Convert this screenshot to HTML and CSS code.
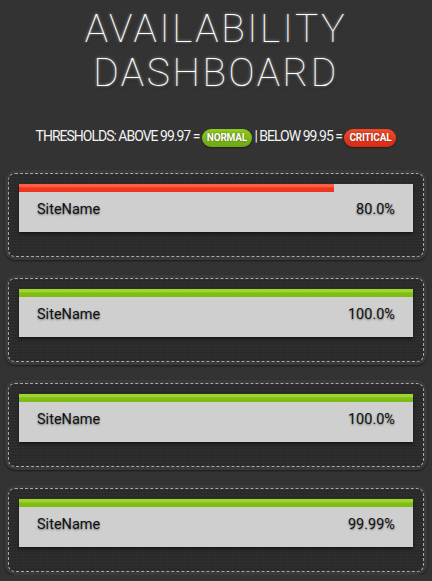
FILE: index.html
```html
<!DOCTYPE html>
<html>
<head>
<meta charset="utf-8">
<link rel="stylesheet" href="styles.css">
</head>
<body>
<h1 class="title">AVAILABILITY<br>DASHBOARD</h1>
<p class="thresholds">THRESHOLDS: ABOVE 99.97 = <span class="pill pill-normal">NORMAL</span> | BELOW 99.95 = <span class="pill pill-critical">CRITICAL</span></p>
<div class="list">
  <div class="card">
    <div class="stitch">
      <div class="panel">
        <div class="track"><div class="bar bar-critical" style="width:80%"></div></div>
        <div class="row"><span class="name">SiteName</span><span class="value">80.0%</span></div>
      </div>
    </div>
  </div>
  <div class="card">
    <div class="stitch">
      <div class="panel">
        <div class="track"><div class="bar bar-normal" style="width:100%"></div></div>
        <div class="row"><span class="name">SiteName</span><span class="value">100.0%</span></div>
      </div>
    </div>
  </div>
  <div class="card">
    <div class="stitch">
      <div class="panel">
        <div class="track"><div class="bar bar-normal" style="width:100%"></div></div>
        <div class="row"><span class="name">SiteName</span><span class="value">100.0%</span></div>
      </div>
    </div>
  </div>
  <div class="card">
    <div class="stitch">
      <div class="panel">
        <div class="track"><div class="bar bar-normal" style="width:100%"></div></div>
        <div class="row"><span class="name">SiteName</span><span class="value">99.99%</span></div>
      </div>
    </div>
  </div>
</div>
</body>
</html>
```
FILE: styles.css
```css
html, body {
  margin: 0;
  padding: 0;
  background: #333333;
  font-family: Roboto, "Liberation Sans", sans-serif;
}
.title {
  margin: 7px 0 0;
  text-align: center;
  font-weight: 100;
  font-size: 39px;
  line-height: 44px;
  letter-spacing: 2.6px;
  color: #ffffff;
  text-shadow: 0 0 3px rgba(255,255,255,0.7), 1px 2px 3px rgba(0,0,0,0.6);
}
.thresholds {
  margin: 31px 0 0;
  text-align: center;
  color: #f2f2f2;
  font-size: 14px;
  letter-spacing: -1px;
  line-height: 20px;
}
.pill {
  display: inline-block;
  font-size: 10px;
  font-weight: bold;
  letter-spacing: -0.2px;
  line-height: 18px;
  padding: 0 5px;
  border-radius: 9px;
  color: #fff;
  vertical-align: 0;
  text-shadow: 0 0 2px rgba(0,0,0,0.5);
  box-shadow: 0 1px 2px rgba(0,0,0,0.4);
}
.pill-normal {
  background: linear-gradient(#8fcb1e, #6fa613);
}
.pill-critical {
  background: linear-gradient(#f44a2a, #d92a14);
}
.list {
  display: flex;
  flex-direction: column;
  gap: 15px;
  margin: 23px 5px 0 5px;
}
.card {
  background: #3a3a3a;
  border-radius: 10px;
  padding: 3px;
  box-shadow: 0 1px 2px rgba(0,0,0,0.5);
}
.stitch {
  border: 1px dashed #a8a8a8;
  border-radius: 7px;
  background-color: #2b2b2b;
  background-image:
    repeating-linear-gradient(0deg, rgba(255,255,255,0.025) 0 1px, transparent 1px 3px),
    repeating-linear-gradient(90deg, rgba(0,0,0,0.08) 0 1px, transparent 1px 3px);
  padding: 10px 10px 24px 10px;
}
.panel {
  background: #cfcfcf;
  box-shadow: 0 2px 3px rgba(0,0,0,0.5);
}
.track {
  height: 8px;
  background: transparent;
}
.bar {
  height: 8px;
}
.bar-critical {
  background: linear-gradient(#ff5d45 0, #ff5d45 40%, #f0381f 45%, #ee3420 100%);
}
.bar-normal {
  background: linear-gradient(#9fd42c 0, #9fd42c 40%, #83bf17 45%, #7eba16 100%);
}
.row {
  display: flex;
  justify-content: space-between;
  align-items: center;
  height: 40px;
  padding: 0 18px 6px 18px;
  box-sizing: border-box;
  font-size: 14.5px;
  color: #111;
  text-shadow: 0 1px 2px rgba(0,0,0,0.45);
}
```
